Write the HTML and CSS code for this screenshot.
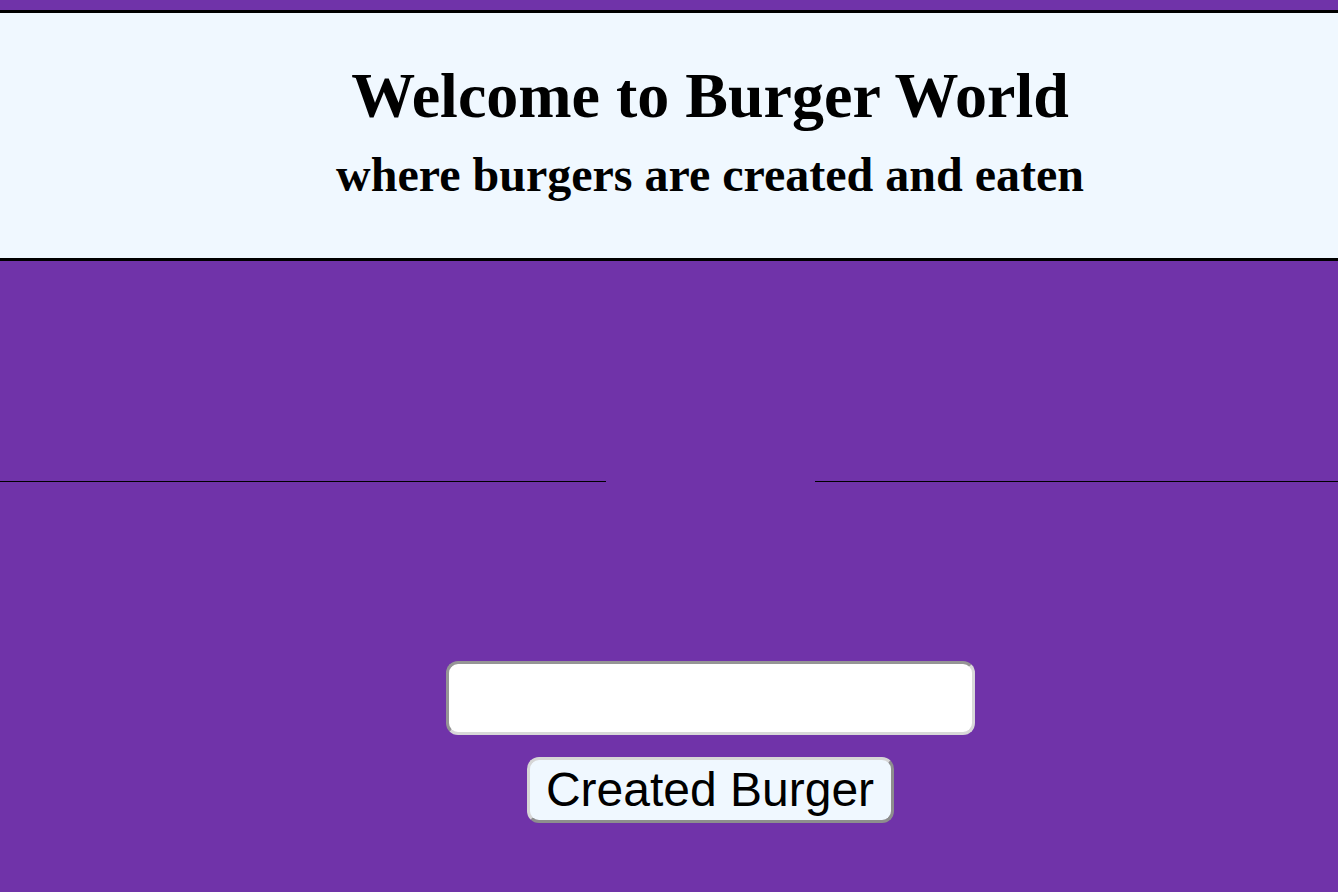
FILE: index.html
```html
<!DOCTYPE html>
<html lang="en">
<head>
<meta charset="utf-8">
<title>Burger World</title>
<link rel="stylesheet" href="styles.css">
</head>
<body>
  <header class="jumbo">
    <h1 class="title">Welcome to Burger World</h1>
    <h2 class="subtitle">where burgers are created and eaten</h2>
  </header>
  <main class="main">
    <div class="divider">
      <div class="rule rule-left"></div>
      <div class="rule rule-right"></div>
    </div>
    <form class="burger-form">
      <input class="burger-input" type="text" name="burger">
      <button class="burger-btn" type="button">Created Burger</button>
    </form>
  </main>
</body>
</html>
```

FILE: styles.css
```css
html, body {
  margin: 0;
  padding: 0;
}

body {
  background: #7033a9;
  font-family: "Liberation Serif", "Times New Roman", serif;
  min-height: 892px;
}

.jumbo {
  margin-top: 10px;
  background: #f0f8ff;
  border-top: 3px solid #000;
  border-bottom: 3px solid #000;
  padding: 46px 0 55px 82px;
  text-align: center;
  color: #000;
}

.title {
  margin: 0;
  font-size: 64px;
  line-height: 74px;
  font-weight: bold;
}

.subtitle {
  margin: 14px 0 0;
  font-size: 48px;
  line-height: 56px;
  font-weight: bold;
}

.main {
  display: flex;
  flex-direction: column;
}

.divider {
  display: flex;
  gap: 209px;
  margin-top: 220px;
}

.rule {
  height: 1px;
  background: #000;
}

.rule-left {
  flex: 0 0 606px;
}

.rule-right {
  flex: 1 1 auto;
}

.burger-form {
  display: flex;
  flex-direction: column;
  align-items: center;
  gap: 22px;
  margin: 179px 0 0;
  padding-left: 82px;
}

.burger-input {
  box-sizing: border-box;
  width: 529px;
  height: 74px;
  margin: 0;
  border: 3px solid;
  border-color: #959595 #d8d8d8 #d8d8d8 #959595;
  border-radius: 12px;
  background: #fff;
  font-family: "Liberation Sans", Arial, sans-serif;
  font-size: 40px;
  padding: 0 12px;
  outline: none;
}

.burger-btn {
  box-sizing: border-box;
  width: 367px;
  height: 66px;
  margin: 0;
  padding: 0;
  border: 3px solid;
  border-color: #d6d6d6 #8e8e8e #8e8e8e #d6d6d6;
  border-radius: 12px;
  background: #f0f8ff;
  color: #000;
  font-family: "Liberation Sans", Arial, sans-serif;
  font-size: 48px;
  line-height: 60px;
}
```
